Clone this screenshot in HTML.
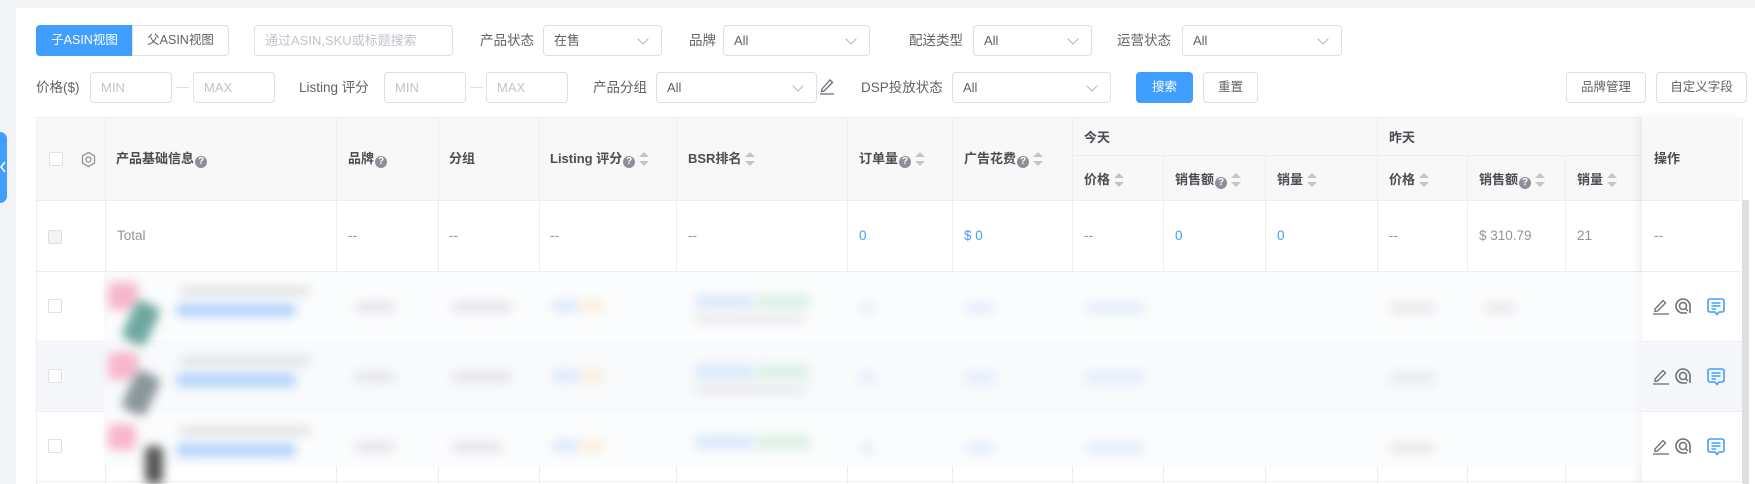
<!DOCTYPE html><html><head><meta charset="utf-8"><style>
*{box-sizing:border-box;margin:0;padding:0}
body{width:1755px;height:484px;overflow:hidden;background:#f3f4f6;font-family:"Liberation Sans","Noto Sans CJK SC",sans-serif;font-size:13px;color:#606266;position:relative}
.a{position:absolute}
.card{left:16px;top:8px;width:1739px;height:476px;background:#fff}
.inp{position:absolute;border:1px solid #dcdfe6;border-radius:4px;background:#fff;color:#c0c4cc;padding-left:10px;line-height:29px;height:31px;font-size:13px}
.sel{color:#606266}
.sel:after{content:"";position:absolute;right:14px;top:9px;width:7px;height:7px;border-right:1px solid #b0b3b8;border-bottom:1px solid #b0b3b8;transform:rotate(45deg)}
.lbl{position:absolute;line-height:31px;color:#606266;font-size:13.5px}
.btn{position:absolute;height:31px;line-height:29px;border:1px solid #dcdfe6;border-radius:4px;text-align:center;background:#fff;color:#606266;font-size:12.5px}
.vl{position:absolute;width:1px;background:#ebeef5}
.hl{position:absolute;height:1px;background:#ebeef5}
.th{position:absolute;font-weight:bold;color:#4a4d52;font-size:13px;line-height:16px;white-space:nowrap}
.q{display:inline-block;width:12px;height:12px;border-radius:50%;background:#8d9099;color:#fff;font-size:10px;line-height:12px;text-align:center;vertical-align:-1px;margin-left:1px}
.s{display:inline-block;width:10px;height:14px;vertical-align:-3px;margin-left:4px;position:relative}
.s:before{content:"";position:absolute;left:0;top:0;border:5px solid transparent;border-bottom:5px solid #c0c4cc;border-top:0}
.s:after{content:"";position:absolute;left:0;bottom:0;border:5px solid transparent;border-top:5px solid #c0c4cc;border-bottom:0}
.td{position:absolute;color:#909399;font-size:13.5px;line-height:16px}
.bl{color:#409eff}
.cb{position:absolute;width:14px;height:14px;border:1px solid #dcdfe6;border-radius:2px;background:#fff}
.blur{position:absolute;filter:blur(5px);border-radius:6px}
</style></head><body>
<div class="a" style="left:0;top:132px;width:7px;height:71px;background:#409eff;border-radius:0 7px 7px 0"></div>
<svg class="a" style="left:0;top:161px" width="6" height="12"><path d="M5 1 L1 6 L5 11" fill="none" stroke="#fff" stroke-width="1.5"/></svg>
<div class="a card"></div>

<div class="btn" style="left:36px;top:25px;width:97px;background:#409eff;border-color:#409eff;color:#fff;border-radius:4px 0 0 4px">子ASIN视图</div>
<div class="btn" style="left:132px;top:25px;width:97px;border-radius:0 4px 4px 0">父ASIN视图</div>
<div class="inp" style="left:254px;top:25px;width:199px">通过ASIN,SKU或标题搜索</div>
<div class="lbl" style="left:480px;top:25px">产品状态</div>
<div class="inp sel" style="left:543px;top:25px;width:119px">在售</div>
<div class="lbl" style="left:689px;top:25px">品牌</div>
<div class="inp sel" style="left:723px;top:25px;width:147px">All</div>
<div class="lbl" style="left:909px;top:25px">配送类型</div>
<div class="inp sel" style="left:973px;top:25px;width:119px">All</div>
<div class="lbl" style="left:1117px;top:25px">运营状态</div>
<div class="inp sel" style="left:1182px;top:25px;width:160px">All</div>

<div class="lbl" style="left:36px;top:72px">价格($)</div>
<div class="inp" style="left:90px;top:72px;width:82px">MIN</div>
<div class="a" style="left:176px;top:87px;width:13px;height:1px;background:#dcdfe6"></div>
<div class="inp" style="left:193px;top:72px;width:82px">MAX</div>
<div class="lbl" style="left:299px;top:72px">Listing 评分</div>
<div class="inp" style="left:384px;top:72px;width:82px">MIN</div>
<div class="a" style="left:470px;top:87px;width:13px;height:1px;background:#dcdfe6"></div>
<div class="inp" style="left:486px;top:72px;width:82px">MAX</div>
<div class="lbl" style="left:593px;top:72px">产品分组</div>
<div class="inp sel" style="left:656px;top:72px;width:161px">All</div>
<svg class="a" style="left:819px;top:77px" width="16" height="18" viewBox="0 0 16 18"><path d="M3 12 L11 3 L13.5 5.5 L5 14 L2.5 14.5 Z" fill="none" stroke="#6b6e75" stroke-width="1.3"/><path d="M1 17 H15" stroke="#6b6e75" stroke-width="1.3"/></svg>
<div class="lbl" style="left:861px;top:72px">DSP投放状态</div>
<div class="inp sel" style="left:952px;top:72px;width:159px">All</div>
<div class="btn" style="left:1136px;top:72px;width:57px;background:#409eff;border-color:#409eff;color:#fff">搜索</div>
<div class="btn" style="left:1203px;top:72px;width:55px">重置</div>
<div class="btn" style="left:1566px;top:72px;width:80px">品牌管理</div>
<div class="btn" style="left:1656px;top:72px;width:91px">自定义字段</div>

<div class="a" style="left:36px;top:117px;width:1706px;height:83px;background:#f8f8f9"></div>
<div class="a" style="left:36px;top:341px;width:1606px;height:70px;background:#f5f7fa"></div>
<div class="hl" style="left:36px;top:117px;width:1706px"></div>
<div class="hl" style="left:1072px;top:155px;width:570px"></div>
<div class="hl" style="left:36px;top:200px;width:1706px"></div>
<div class="hl" style="left:36px;top:271px;width:1706px"></div>
<div class="hl" style="left:36px;top:341px;width:1706px"></div>
<div class="hl" style="left:36px;top:411px;width:1706px"></div>
<div class="hl" style="left:36px;top:481px;width:1706px"></div>
<div class="vl" style="left:36px;top:117px;height:367px"></div>
<div class="vl" style="left:105px;top:117px;height:367px"></div>
<div class="vl" style="left:336px;top:117px;height:155px"></div>
<div class="vl" style="left:438px;top:117px;height:155px"></div>
<div class="vl" style="left:539px;top:117px;height:155px"></div>
<div class="vl" style="left:676px;top:117px;height:155px"></div>
<div class="vl" style="left:847px;top:117px;height:155px"></div>
<div class="vl" style="left:952px;top:117px;height:155px"></div>
<div class="vl" style="left:1072px;top:117px;height:155px"></div>
<div class="vl" style="left:1163px;top:155px;height:117px"></div>
<div class="vl" style="left:1265px;top:155px;height:117px"></div>
<div class="vl" style="left:1377px;top:117px;height:155px"></div>
<div class="vl" style="left:1467px;top:155px;height:117px"></div>
<div class="vl" style="left:1565px;top:155px;height:117px"></div>
<div class="vl" style="left:336px;top:466px;height:18px"></div>
<div class="vl" style="left:438px;top:466px;height:18px"></div>
<div class="vl" style="left:539px;top:466px;height:18px"></div>
<div class="vl" style="left:676px;top:466px;height:18px"></div>
<div class="vl" style="left:847px;top:466px;height:18px"></div>
<div class="vl" style="left:952px;top:466px;height:18px"></div>
<div class="vl" style="left:1072px;top:466px;height:18px"></div>
<div class="vl" style="left:1163px;top:466px;height:18px"></div>
<div class="vl" style="left:1265px;top:466px;height:18px"></div>
<div class="vl" style="left:1377px;top:466px;height:18px"></div>
<div class="vl" style="left:1467px;top:466px;height:18px"></div>
<div class="vl" style="left:1565px;top:466px;height:18px"></div>
<div class="a" style="left:1642px;top:117px;width:100px;height:367px;box-shadow:-5px 0 8px rgba(0,0,0,0.06);background:transparent"></div>
<div class="a" style="left:1642px;top:117px;width:100px;height:83px;background:#f8f8f9"></div>
<div class="a" style="left:1642px;top:341px;width:100px;height:70px;background:#f5f7fa"></div>
<div class="hl" style="left:1642px;top:200px;width:100px"></div>
<div class="hl" style="left:1642px;top:271px;width:100px"></div>
<div class="hl" style="left:1642px;top:341px;width:100px"></div>
<div class="hl" style="left:1642px;top:411px;width:100px"></div>
<div class="vl" style="left:1742px;top:117px;height:367px"></div>
<div class="a" style="left:1742px;top:200px;width:7px;height:284px;background:#dedfe2"></div>

<div class="cb" style="left:49px;top:152px"></div>
<svg class="a" style="left:80px;top:151px" width="17" height="17" viewBox="0 0 24 24"><path d="M12 2 L20.5 7 V17 L12 22 L3.5 17 V7 Z" fill="none" stroke="#8d9099" stroke-width="1.8" stroke-linejoin="round"/><circle cx="12" cy="12" r="3.5" fill="none" stroke="#8d9099" stroke-width="1.8"/></svg>
<div class="th" style="left:116px;top:151px">产品基础信息<span class="q">?</span></div>
<div class="th" style="left:348px;top:151px">品牌<span class="q">?</span></div>
<div class="th" style="left:449px;top:151px">分组</div>
<div class="th" style="left:550px;top:151px">Listing 评分<span class="q">?</span><span class="s"></span></div>
<div class="th" style="left:688px;top:151px">BSR排名<span class="s"></span></div>
<div class="th" style="left:859px;top:151px">订单量<span class="q">?</span><span class="s"></span></div>
<div class="th" style="left:964px;top:151px">广告花费<span class="q">?</span><span class="s"></span></div>
<div class="th" style="left:1084px;top:130px">今天</div>
<div class="th" style="left:1389px;top:130px">昨天</div>
<div class="th" style="left:1084px;top:172px">价格<span class="s"></span></div>
<div class="th" style="left:1175px;top:172px">销售额<span class="q">?</span><span class="s"></span></div>
<div class="th" style="left:1277px;top:172px">销量<span class="s"></span></div>
<div class="th" style="left:1389px;top:172px">价格<span class="s"></span></div>
<div class="th" style="left:1479px;top:172px">销售额<span class="q">?</span><span class="s"></span></div>
<div class="th" style="left:1577px;top:172px">销量<span class="s"></span></div>
<div class="th" style="left:1654px;top:151px">操作</div>

<div class="cb" style="left:48px;top:230px;background:#f2f3f5"></div>
<div class="td" style="left:117px;top:228px">Total</div>
<div class="td" style="left:348px;top:228px">--</div>
<div class="td" style="left:449px;top:228px">--</div>
<div class="td" style="left:550px;top:228px">--</div>
<div class="td" style="left:688px;top:228px">--</div>
<div class="td bl" style="left:859px;top:228px">0</div>
<div class="td bl" style="left:964px;top:228px">$ 0</div>
<div class="td" style="left:1084px;top:228px">--</div>
<div class="td bl" style="left:1175px;top:228px">0</div>
<div class="td bl" style="left:1277px;top:228px">0</div>
<div class="td" style="left:1389px;top:228px">--</div>
<div class="td" style="left:1479px;top:228px">$ 310.79</div>
<div class="td" style="left:1577px;top:228px">21</div>
<div class="td" style="left:1654px;top:228px">--</div>

<div class="cb" style="left:48px;top:299px"></div>
<div class="cb" style="left:48px;top:369px"></div>
<div class="cb" style="left:48px;top:439px"></div>

<div class="a" style="left:104px;top:272px;width:1538px;height:194px;background:rgba(250,251,252,0.7)"></div>
<div class="blur" style="left:108px;top:282px;width:30px;height:28px;background:#f7b6cc"></div>
<div class="blur" style="left:128px;top:302px;width:26px;height:42px;background:#6fa8a0;transform:rotate(25deg)"></div>
<div class="blur" style="left:108px;top:352px;width:30px;height:28px;background:#f7b6cc"></div>
<div class="blur" style="left:128px;top:372px;width:26px;height:42px;background:#8a969c;transform:rotate(25deg)"></div>
<div class="blur" style="left:108px;top:424px;width:28px;height:26px;background:#f7b6cc"></div>
<div class="blur" style="left:145px;top:446px;width:18px;height:38px;background:#555"></div>
<div class="blur" style="left:180px;top:287px;width:130px;height:8px;background:#dcdde0"></div>
<div class="blur" style="left:176px;top:303px;width:120px;height:14px;background:#b5d4fb"></div>
<div class="blur" style="left:180px;top:357px;width:130px;height:8px;background:#dcdde0"></div>
<div class="blur" style="left:176px;top:373px;width:120px;height:14px;background:#b5d4fb"></div>
<div class="blur" style="left:180px;top:427px;width:130px;height:8px;background:#dcdde0"></div>
<div class="blur" style="left:176px;top:443px;width:120px;height:14px;background:#b5d4fb"></div>
<div class="blur" style="left:355px;top:302px;width:40px;height:10px;background:#e2e3e6"></div>
<div class="blur" style="left:452px;top:302px;width:60px;height:10px;background:#e2e3e6"></div>
<div class="blur" style="left:552px;top:300px;width:28px;height:12px;background:#dce8fb"></div>
<div class="blur" style="left:580px;top:300px;width:24px;height:12px;background:#fbeedb"></div>
<div class="blur" style="left:355px;top:372px;width:40px;height:10px;background:#e2e3e6"></div>
<div class="blur" style="left:452px;top:372px;width:60px;height:10px;background:#e2e3e6"></div>
<div class="blur" style="left:552px;top:370px;width:28px;height:12px;background:#dce8fb"></div>
<div class="blur" style="left:580px;top:370px;width:24px;height:12px;background:#fbeedb"></div>
<div class="blur" style="left:355px;top:442px;width:40px;height:10px;background:#e2e3e6"></div>
<div class="blur" style="left:452px;top:442px;width:50px;height:10px;background:#e2e3e6"></div>
<div class="blur" style="left:552px;top:440px;width:28px;height:12px;background:#dce8fb"></div>
<div class="blur" style="left:580px;top:440px;width:24px;height:12px;background:#fbeedb"></div>
<div class="blur" style="left:695px;top:295px;width:60px;height:14px;background:#dbe8fb"></div>
<div class="blur" style="left:755px;top:295px;width:55px;height:14px;background:#dbf0e4"></div>
<div class="blur" style="left:695px;top:315px;width:110px;height:8px;background:#e6e7ea"></div>
<div class="blur" style="left:695px;top:365px;width:60px;height:14px;background:#dbe8fb"></div>
<div class="blur" style="left:755px;top:365px;width:55px;height:14px;background:#dbf0e4"></div>
<div class="blur" style="left:695px;top:385px;width:110px;height:8px;background:#e6e7ea"></div>
<div class="blur" style="left:695px;top:435px;width:60px;height:14px;background:#dbe8fb"></div>
<div class="blur" style="left:755px;top:435px;width:55px;height:14px;background:#dbf0e4"></div>
<div class="blur" style="left:860px;top:303px;width:14px;height:10px;background:#e1ebfb"></div>
<div class="blur" style="left:965px;top:303px;width:30px;height:10px;background:#e1ebfb"></div>
<div class="blur" style="left:1085px;top:303px;width:60px;height:10px;background:#e1ebfb"></div>
<div class="blur" style="left:860px;top:373px;width:14px;height:10px;background:#e1ebfb"></div>
<div class="blur" style="left:965px;top:373px;width:30px;height:10px;background:#e1ebfb"></div>
<div class="blur" style="left:1085px;top:373px;width:60px;height:10px;background:#e1ebfb"></div>
<div class="blur" style="left:860px;top:443px;width:14px;height:10px;background:#e1ebfb"></div>
<div class="blur" style="left:965px;top:443px;width:30px;height:10px;background:#e1ebfb"></div>
<div class="blur" style="left:1085px;top:443px;width:60px;height:10px;background:#e1ebfb"></div>
<div class="blur" style="left:1390px;top:303px;width:45px;height:10px;background:#e6e7ea"></div>
<div class="blur" style="left:1485px;top:303px;width:30px;height:10px;background:#e6e7ea"></div>
<div class="blur" style="left:1390px;top:373px;width:45px;height:10px;background:#e6e7ea"></div>
<div class="blur" style="left:1390px;top:443px;width:45px;height:10px;background:#e6e7ea"></div>

<svg width="0" height="0" style="position:absolute"><defs>
<g id="ops">
<path d="M2 13 L10 4.5 L12.5 7 L4.5 15 L2 15.5 Z" fill="none" stroke="#6b6e75" stroke-width="1.3"/><path d="M0 18 H16" stroke="#6b6e75" stroke-width="1.3"/>
<path d="M34 17 H30 A7 7 0 1 1 37 10 V17" fill="none" stroke="#6b6e75" stroke-width="1.6"/><circle cx="30" cy="10" r="3.5" fill="none" stroke="#6b6e75" stroke-width="1.5"/><path d="M32.5 12.5 L35 15" stroke="#6b6e75" stroke-width="1.5"/>
<path d="M57 3 H69 A2 2 0 0 1 71 5 V14 A2 2 0 0 1 69 16 H66 L64 18.5 L62 16 H57 A2 2 0 0 1 55 14 V5 A2 2 0 0 1 57 3 Z" fill="none" stroke="#409eff" stroke-width="1.6"/><path d="M58.5 7 H67.5 M58.5 10 H67.5 M58.5 13 H63" stroke="#409eff" stroke-width="1.5"/>
</g></defs></svg>
<svg class="a" style="left:1653px;top:296px" width="74" height="20"><use href="#ops"/></svg>
<svg class="a" style="left:1653px;top:366px" width="74" height="20"><use href="#ops"/></svg>
<svg class="a" style="left:1653px;top:436px" width="74" height="20"><use href="#ops"/></svg>
</body></html>
